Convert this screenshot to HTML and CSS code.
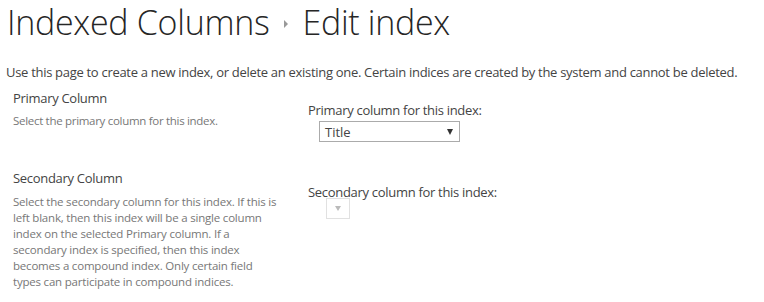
FILE: index.html
```html
<!DOCTYPE html>
<html lang="en">
<head>
    <meta charset="UTF-8">
    <title>Indexed Columns - Edit index</title>
    <link rel="stylesheet" href="styles.css">
</head>
<body>

<div class="page">
    <h1 class="title">
        <span>Indexed Columns</span>
        <span class="crumb-arrow"></span>
        <span>Edit index</span>
    </h1>

    <p class="intro">Use this page to create a new index, or delete an existing one. Certain indices are created by the system and cannot be deleted.</p>

    <div class="section primary">
        <div class="section-info">
            <h3>Primary Column</h3>
            <p>Select the primary column for this index.</p>
        </div>
        <div class="section-field">
            <label>Primary column for this index:</label>
            <div class="select">
                <span>Title</span>
                <span class="arrow"></span>
            </div>
        </div>
    </div>

    <div class="section secondary">
        <div class="section-info">
            <h3>Secondary Column</h3>
            <p>Select the secondary column for this index. If this is left blank, then this index will be a single column index on the selected Primary column. If a secondary index is specified, then this index becomes a compound index. Only certain field types can participate in compound indices.</p>
        </div>
        <div class="section-field">
            <label>Secondary column for this index:</label>
            <div class="select disabled">
                <span class="arrow"></span>
            </div>
        </div>
    </div>
</div>

</body>
</html>
```

FILE: styles.css
```css
body {
    margin: 0;
    font-family: "Open Sans", Arial, sans-serif;
    background: #fff;
    color: #444;
}
.page {
    padding: 0 0 0 6px;
}
.title {
    display: flex;
    align-items: center;
    margin: 0;
    padding: 0 0 0 1px;
    font-size: 34px;
    font-weight: 300;
    line-height: 44px;
    color: #262626;
    letter-spacing: -0.3px;
}
.crumb-arrow {
    width: 0;
    height: 0;
    margin: 4px 14px 0 15px;
    border-top: 4px solid transparent;
    border-bottom: 4px solid transparent;
    border-left: 4px solid #999;
}
.intro {
    margin: 20px 0 0;
    font-size: 13px;
    line-height: 16px;
    letter-spacing: -0.3px;
}
.section {
    display: flex;
    padding-left: 7px;
}
.primary {
    margin-top: 9px;
}
.section-info {
    width: 295px;
}
.section-info h3 {
    margin: 0;
    font-size: 13px;
    font-weight: 400;
    line-height: 18px;
    letter-spacing: -0.3px;
}
.section-info p {
    margin: 0;
    font-size: 11.5px;
    line-height: 16px;
    color: #777;
    letter-spacing: -0.3px;
}
.primary .section-info p {
    margin-top: 6px;
}
.secondary {
    margin-top: 27px;
}
.secondary .section-info p {
    margin-top: 7px;
    width: 268px;
    letter-spacing: -0.2px;
}
.section-field label {
    display: block;
    font-size: 13px;
    line-height: 18px;
    letter-spacing: -0.3px;
}
.primary .section-field {
    padding-top: 12px;
}
.secondary .section-field {
    padding-top: 14px;
}
.select {
    display: flex;
    align-items: center;
    justify-content: space-between;
    box-sizing: border-box;
    width: 141px;
    height: 21px;
    margin: 2px 0 0 11px;
    padding: 0 6px 0 5px;
    border: 1px solid #ababab;
    font-size: 13px;
    color: #444;
}
.select .arrow {
    width: 0;
    height: 0;
    border-left: 3.5px solid transparent;
    border-right: 3.5px solid transparent;
    border-top: 6px solid #333;
}
.select.disabled {
    width: 24px;
    margin-left: 18px;
    margin-top: -3px;
    justify-content: center;
    padding: 0;
    border-color: #e1e1e1;
}
.select.disabled .arrow {
    border-top-color: #bbb;
    border-left-width: 3px;
    border-right-width: 3px;
    border-top-width: 5px;
}
```
